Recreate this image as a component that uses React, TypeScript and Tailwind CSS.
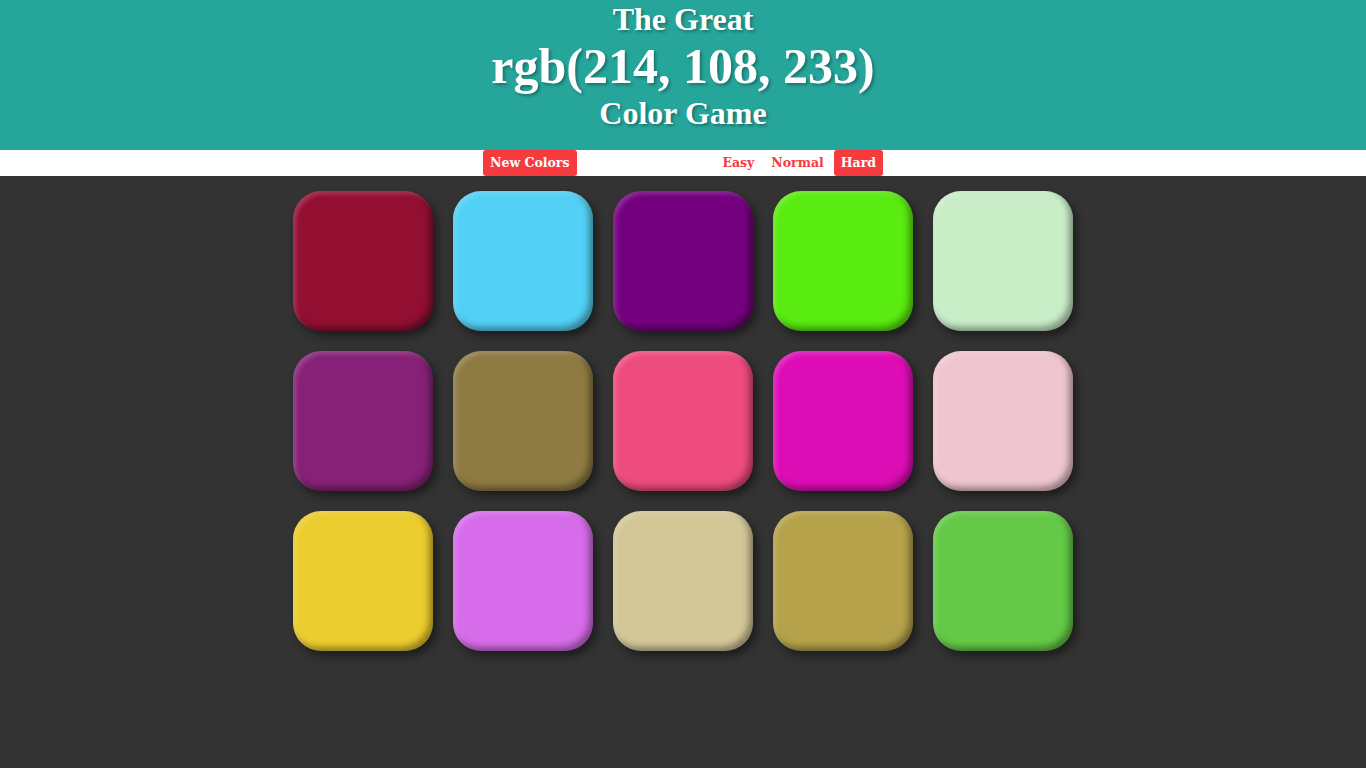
import React, { useState } from 'react';

const colors = [
  '#930f32', '#53d0f5', '#75007f', '#5aeb10', '#c8edc7',
  '#862177', '#8e7b42', '#ee4b7e', '#dd0db5', '#efc6cf',
  '#eccd2f', '#d66ce9', '#d3c798', '#b5a24a', '#64c946',
];

const modes = ['Easy', 'Normal', 'Hard'];

export default function App() {
  const [mode, setMode] = useState('Hard');

  return (
    <div className="min-h-screen bg-[#333333] font-['Liberation_Serif',serif]">
      {/* Title */}
      <header className="h-[150px] bg-[#26a59a] pt-px text-center font-bold text-white [text-shadow:2px_2px_3px_rgba(0,0,0,0.3)]">
        <div className="text-[32px] leading-[37px]">The Great</div>
        <div className="text-[50px] leading-[57px]">rgb(214, 108, 233)</div>
        <div className="text-[32px] leading-[37px]">Color Game</div>
      </header>

      {/* Controls */}
      <nav className="h-[26px] bg-white">
        <div className="mx-auto flex h-full w-[400px] items-stretch justify-between font-['DejaVu_Serif',serif] text-[12.5px] font-bold">
          <button className="rounded-[3px] bg-[#f63a3d] px-[7px] text-white">New Colors</button>
          <div className="flex gap-[3px]">
            {modes.map((m) => (
              <button
                key={m}
                onClick={() => setMode(m)}
                className={
                  mode === m
                    ? 'rounded-[3px] bg-[#f63a3d] px-[7px] text-white'
                    : 'rounded-[3px] bg-white px-[7px] text-[#f63a3d]'
                }
              >
                {m}
              </button>
            ))}
          </div>
        </div>
      </nav>

      {/* Squares */}
      <main className="mx-auto grid w-[780px] grid-cols-5 gap-5 pt-[15px]">
        {colors.map((c) => (
          <div
            key={c}
            className="h-[140px] w-[140px] rounded-[28px] shadow-[inset_3px_3px_4px_rgba(255,255,255,0.18),inset_-4px_-4px_6px_rgba(0,0,0,0.38),4px_5px_9px_rgba(0,0,0,0.45)]"
            style={{ backgroundColor: c }}
          />
        ))}
      </main>
    </div>
  );
}
